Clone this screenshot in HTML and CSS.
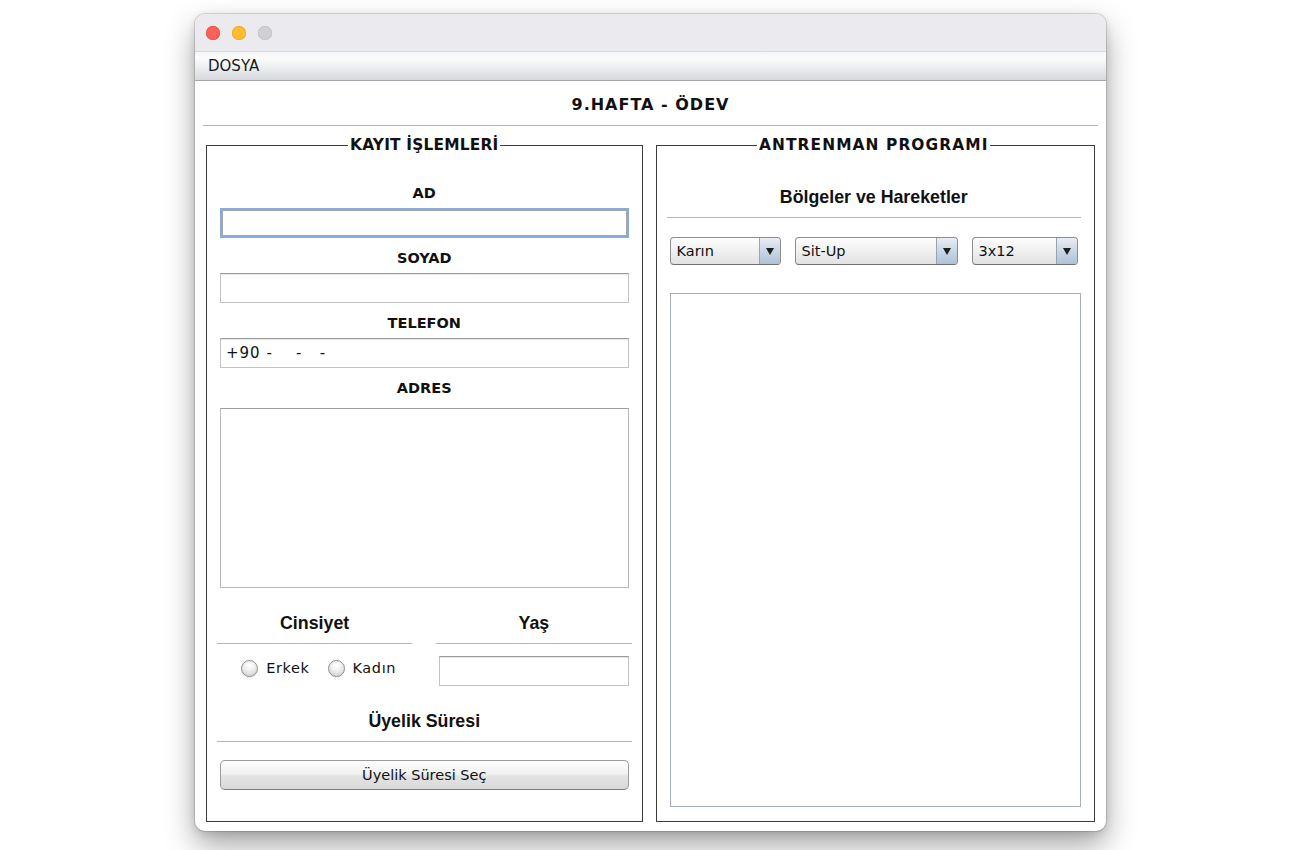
FILE: index.html
```html
<!DOCTYPE html>
<html lang="tr">
<head>
<meta charset="utf-8">
<title>9.HAFTA - ÖDEV</title>
<link rel="stylesheet" href="styles.css">
</head>
<body>
<div class="window">
  <div class="titlebar">
    <span class="light red"></span>
    <span class="light yellow"></span>
    <span class="light gray"></span>
  </div>
  <div class="menubar"><span class="menu">DOSYA</span></div>
  <div class="content">
    <div class="apptitle">9.HAFTA - ÖDEV</div>
    <div class="rule"></div>
    <div class="panels">
      <fieldset class="panel left">
        <legend>KAYIT İŞLEMLERİ</legend>
        <div class="label first">AD</div>
        <div class="field focused"></div>
        <div class="label">SOYAD</div>
        <div class="field"></div>
        <div class="label">TELEFON</div>
        <div class="field tel">+90 -    -   -</div>
        <div class="label">ADRES</div>
        <div class="textarea"></div>
        <div class="cols">
          <div class="col">
            <div class="heading">Cinsiyet</div>
            <div class="radios">
              <span class="radio"><span class="dot"></span>Erkek</span>
              <span class="radio"><span class="dot"></span>Kadın</span>
            </div>
          </div>
          <div class="col">
            <div class="heading">Yaş</div>
            <div class="field age"></div>
          </div>
        </div>
        <div class="heading uyelik">Üyelik Süresi</div>
        <div class="button">Üyelik Süresi Seç</div>
      </fieldset>
      <fieldset class="panel right">
        <legend>ANTRENMAN PROGRAMI</legend>
        <div class="heading big">Bölgeler ve Hareketler</div>
        <div class="combos">
          <div class="combo w1"><span class="ctext">Karın</span><span class="arrow"></span></div>
          <div class="combo w2"><span class="ctext">Sit-Up</span><span class="arrow"></span></div>
          <div class="combo w3"><span class="ctext">3x12</span><span class="arrow"></span></div>
        </div>
        <div class="list"></div>
      </fieldset>
    </div>
  </div>
</div>
</body>
</html>
```
FILE: styles.css
```css
html, body {
  margin: 0;
  padding: 0;
  background: #ffffff;
}
body {
  width: 1300px;
  height: 850px;
  overflow: hidden;
  font-family: "DejaVu Sans", "Liberation Sans", sans-serif;
  color: #111;
}
.window {
  margin: 14px 0 0 195px;
  width: 911px;
  height: 817px;
  border-radius: 10px;
  overflow: hidden;
  display: flex;
  flex-direction: column;
  background: #fff;
  box-shadow: 0 0 0 1px rgba(0,0,0,0.12), 0 14px 30px rgba(0,0,0,0.36), 0 2px 8px rgba(0,0,0,0.12);
}
.titlebar {
  height: 37px;
  background: #ebebef;
  display: flex;
  align-items: center;
  gap: 12px;
  padding-left: 11px;
  border-bottom: 1px solid #dadade;
  flex: none;
}
.light {
  width: 14px;
  height: 14px;
  border-radius: 50%;
  display: block;
}
.red { background: #fe5f57; box-shadow: inset 0 0 0 0.5px #e0443e; }
.yellow { background: #febc2e; box-shadow: inset 0 0 0 0.5px #dea123; }
.gray { background: #d1d0d4; box-shadow: inset 0 0 0 0.5px #bdbcc0; }
.menubar {
  height: 28px;
  flex: none;
  background: linear-gradient(#f4f5f6 0%, #fcfcfc 20%, #eceef0 55%, #d6d8dc 100%);
  border-bottom: 1px solid #a4a6ab;
  display: flex;
  align-items: center;
  padding-left: 13px;
}
.menu {
  font-size: 15px;
  color: #1a1a1a;
}
.content {
  flex: 1;
  display: flex;
  flex-direction: column;
  padding: 0 11px 9px;
  min-height: 0;
}
.apptitle {
  height: 40px;
  line-height: 40px;
  padding-top: 4px;
  text-align: center;
  font-weight: bold;
  font-size: 16px;
  letter-spacing: 1px;
}
.rule {
  height: 1px;
  background: #b4b5bb;
  margin: 0 -3px;
}
.panels {
  flex: 1;
  display: flex;
  gap: 13px;
  margin-top: 10px;
  min-height: 0;
}
.panel {
  margin: 0;
  padding: 0;
  border: 1px solid #3c3c3c;
  min-width: 0;
  display: flex;
  flex-direction: column;
}
.panel.left { width: 437px; padding: 0 10px; box-sizing: border-box; }
.panel.right { width: 440px; padding: 0 13px 0 10px; box-sizing: border-box; }
legend {
  margin: 0 auto;
  padding: 0 2px;
  font-weight: bold;
  font-size: 15.4px;
  line-height: 18px;
  letter-spacing: 0.2px;
}
.right legend {
  letter-spacing: 1.1px;
}
.label {
  height: 20px;
  line-height: 20px;
  text-align: center;
  font-weight: bold;
  font-size: 14.5px;
  margin-top: 10px;
}
.label.first { margin-top: 29px; }
.field {
  height: 30px;
  box-sizing: border-box;
  margin: 5px 3px 0;
  border: 1px solid #c3c3c3;
  border-top-color: #9b9b9b;
  box-shadow: inset 0 1px 0 #e6e6e6;
  background: #fff;
  font-size: 15px;
  line-height: 28px;
  padding-left: 5px;
  white-space: pre;
}
.field.tel {
  letter-spacing: 1px;
}
.field.focused {
  border: 2px solid #86acdb;
  box-shadow: inset 0 0 0 1px #a5a5a5;
}
.textarea {
  height: 180px;
  box-sizing: border-box;
  margin: 10px 3px 0;
  border: 1px solid #b9b9b9;
  border-top-color: #9c9c9c;
  background: #fff;
}
.cols {
  display: flex;
  gap: 24px;
  margin-top: 25px;
}
.col {
  flex: 1;
  display: flex;
  flex-direction: column;
}
.heading {
  height: 20px;
  line-height: 20px;
  padding-bottom: 10px;
  border-bottom: 1px solid #b3b5bb;
  text-align: center;
  font-family: "Liberation Sans", Arial, sans-serif;
  font-weight: bold;
  font-size: 17.8px;
}
.radios {
  display: flex;
  justify-content: center;
  gap: 18px;
  padding-left: 8px;
  height: 22px;
  margin-top: 13px;
  align-items: center;
}
.radio {
  display: flex;
  align-items: center;
  gap: 8px;
  font-size: 14.5px;
  letter-spacing: 0.6px;
}
.dot {
  width: 17px;
  height: 17px;
  box-sizing: border-box;
  border-radius: 50%;
  border: 1px solid #8e8e8e;
  background: radial-gradient(circle at 50% 30%, #ffffff 0%, #f2f2f2 35%, #c9c9c9 100%);
  box-shadow: 0 1px 0 rgba(0,0,0,0.08);
}
.field.age {
  margin-top: 12px;
}
.heading.uyelik {
  margin-top: 25px;
}
.button {
  margin: 18px 3px 0;
  height: 30px;
  box-sizing: border-box;
  border: 1px solid #9a9a9a;
  border-bottom-color: #7c7c7c;
  border-radius: 5px;
  background: linear-gradient(#fdfdfd 0%, #f1f1f1 45%, #e3e3e3 55%, #d9d9d9 100%);
  text-align: center;
  font-size: 14.5px;
  line-height: 28px;
}
.heading.big {
  margin-top: 33px;
}
.combos {
  display: flex;
  gap: 14px;
  margin: 19px 3px 0;
}
.combo {
  height: 28px;
  box-sizing: border-box;
  border: 1px solid #8d8d8d;
  border-bottom-color: #6f6f6f;
  border-radius: 4px;
  background: linear-gradient(#fdfdfd 0%, #f0f0f0 50%, #e2e2e2 100%);
  display: flex;
  overflow: hidden;
}
.w1 { width: 111px; }
.w2 { width: 163px; }
.w3 { width: 106px; }
.ctext {
  flex: 1;
  padding-left: 6px;
  font-size: 14.5px;
  line-height: 26px;
}
.arrow {
  width: 20px;
  border-left: 1px solid #9aa3ad;
  background: linear-gradient(#e8eef6 0%, #c9d6e5 50%, #aec2d8 100%);
  display: flex;
  align-items: center;
  justify-content: center;
}
.arrow::after {
  content: "";
  width: 0;
  height: 0;
  border-left: 4px solid transparent;
  border-right: 4px solid transparent;
  border-top: 7px solid #1e1e1e;
}
.list {
  flex: 1;
  margin: 28px 0 14px 3px;
  border: 1px solid #a7aebb;
  background: #fff;
}
```
